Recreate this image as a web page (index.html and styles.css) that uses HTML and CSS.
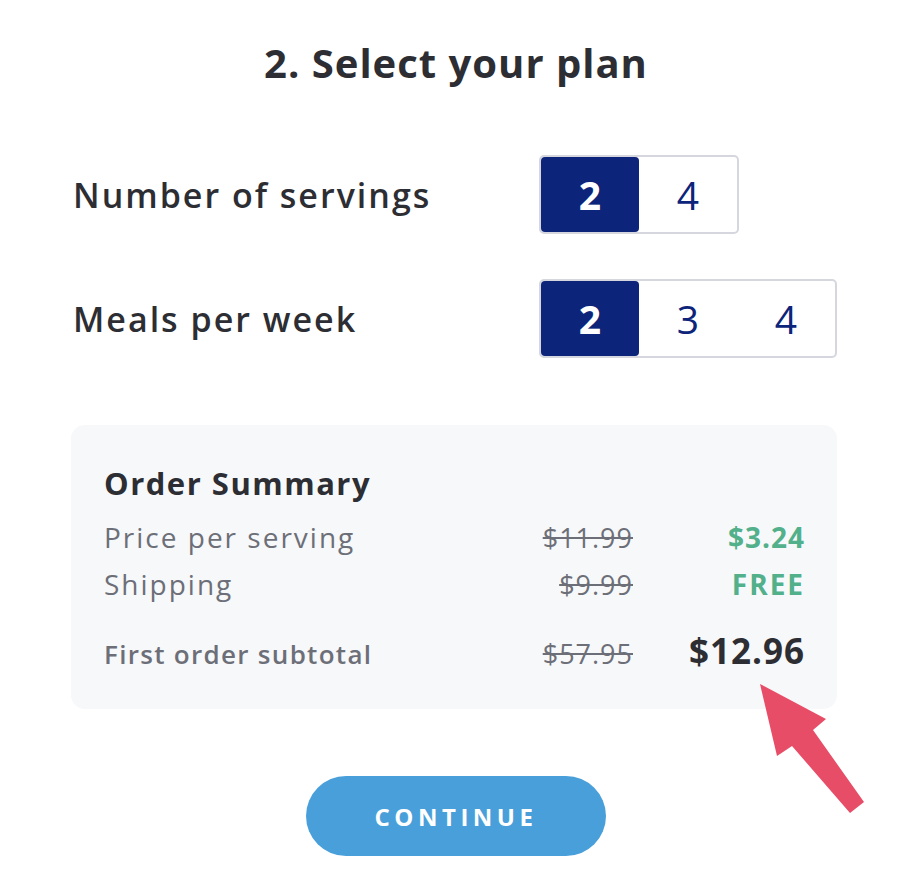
FILE: index.html
```html
<!DOCTYPE html>
<html>
<head>
<meta charset="utf-8">
<link rel="stylesheet" href="styles.css">
</head>
<body>
<div class="page">
  <h1 class="title">2. Select your plan</h1>
  <div class="option-row">
    <div class="option-label">Number of servings</div>
    <div class="toggle">
      <div class="seg seg-active">2</div>
      <div class="seg">4</div>
    </div>
  </div>
  <div class="option-row row-2">
    <div class="option-label">Meals per week</div>
    <div class="toggle">
      <div class="seg seg-active">2</div>
      <div class="seg">3</div>
      <div class="seg">4</div>
    </div>
  </div>
  <div class="summary">
    <div class="summary-title">Order Summary</div>
    <div class="sum-row">
      <div class="sum-label">Price per serving</div>
      <div class="sum-old">$11.99</div>
      <div class="sum-new green">$3.24</div>
    </div>
    <div class="sum-row">
      <div class="sum-label">Shipping</div>
      <div class="sum-old">$9.99</div>
      <div class="sum-new green free">FREE</div>
    </div>
    <div class="sum-row sum-total">
      <div class="sum-label">First order subtotal</div>
      <div class="sum-old">$57.95</div>
      <div class="sum-new total">$12.96</div>
    </div>
    <svg class="arrow" width="120" height="140" viewBox="750 675 120 140">
      <polygon fill="#e84d67" points="760,684 826,719 813,730 864,802 850,813 792,746 777,756"/>
    </svg>
  </div>
  <div class="btn-wrap">
    <div class="btn">CONTINUE</div>
  </div>
</div>
</body>
</html>
```
FILE: styles.css
```css
html, body {
  margin: 0;
  padding: 0;
  background: #ffffff;
}
body {
  font-family: "Open Sans", "Noto Sans", sans-serif;
  color: #2d2e33;
}
.page {
  width: 912px;
  height: 892px;
  position: relative;
  overflow: hidden;
}
.title {
  margin: 0;
  padding-top: 36px;
  text-align: center;
  font-size: 40px;
  line-height: 54px;
  font-weight: 700;
  letter-spacing: 1px;
  color: #2d2e33;
}
.option-row {
  display: flex;
  align-items: center;
  padding-left: 73px;
  margin-top: 65px;
}
.row-2 {
  margin-top: 45px;
}
.option-label {
  width: 466px;
  font-size: 34px;
  font-weight: 600;
  letter-spacing: 2px;
  color: #2d2e33;
}
.toggle {
  display: flex;
  border: 2px solid #d6d7de;
  border-radius: 5px;
  background: #fff;
}
.seg {
  width: 98px;
  height: 75px;
  display: flex;
  align-items: center;
  justify-content: center;
  font-size: 39px;
  color: #0c2479;
}
.seg-active {
  background: #0c2479;
  color: #fff;
  font-weight: 700;
  border-radius: 4px;
}
.summary {
  position: relative;
  margin: 67px 0 0 71px;
  width: 766px;
  height: 284px;
  box-sizing: border-box;
  padding: 36px 32px 0 33px;
  background: #f7f8fa;
  border-radius: 14px;
}
.summary-title {
  font-size: 31px;
  font-weight: 700;
  line-height: 44px;
  letter-spacing: 1.5px;
  color: #2d2e33;
  margin-bottom: 9px;
}
.sum-row {
  display: flex;
  align-items: baseline;
  height: 47px;
  line-height: 47px;
}
.sum-label {
  flex: 1;
  font-size: 28px;
  letter-spacing: 2px;
  color: #6d6f78;
}
.sum-old {
  font-size: 27px;
  letter-spacing: 1px;
  color: #6d6f78;
  text-decoration: line-through;
  text-decoration-thickness: 2px;
  text-align: right;
}
.sum-new {
  width: 172px;
  text-align: right;
  font-size: 28px;
  font-weight: 700;
  letter-spacing: 1px;
}
.green {
  color: #52b08a;
}
.free {
  letter-spacing: 2px;
}
.sum-total {
  margin-top: 19px;
}
.sum-total .sum-label {
  font-size: 26px;
  font-weight: 600;
  letter-spacing: 1.3px;
}
.total {
  font-size: 35px;
  color: #2d2e33;
}
.arrow {
  position: absolute;
  left: 679px;
  top: 250px;
}
.btn-wrap {
  display: flex;
  justify-content: center;
  margin-top: 67px;
}
.btn {
  width: 300px;
  height: 80px;
  border-radius: 40px;
  background: #489fda;
  color: #fff;
  font-size: 24px;
  font-weight: 700;
  letter-spacing: 4.5px;
  display: flex;
  align-items: center;
  justify-content: center;
}
```
